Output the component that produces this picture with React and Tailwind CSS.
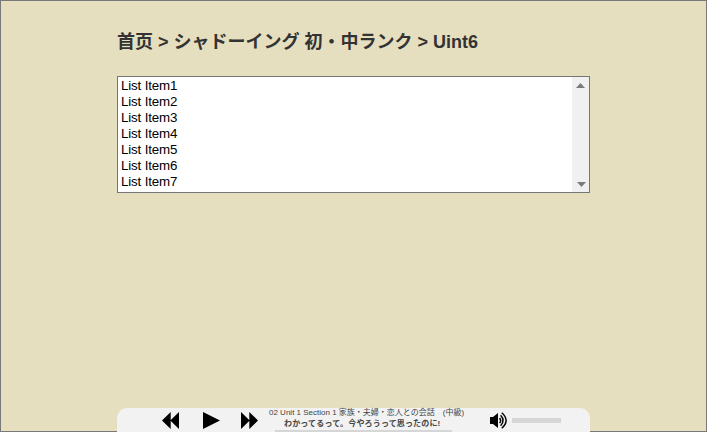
const items = ['List Item1', 'List Item2', 'List Item3', 'List Item4', 'List Item5', 'List Item6', 'List Item7'];

function ListBox() {
  return (
    <div className="flex h-[117px] w-[473px] border border-[#767676] bg-white">
      <ul className="flex-1 pt-px pl-[3px] text-[13.333px] leading-4 tracking-[-0.15px] text-black">
        {items.map((item) => (
          <li key={item}>{item}</li>
        ))}
      </ul>
      <div className="flex w-[17px] flex-col items-center justify-between bg-[#f0f0f0] pt-[6px] pb-[5px]">
        <svg className="h-[5px] w-[9px]" viewBox="0 0 9 5" fill="#7b7b7b"><path d="M0 5L4.5 0L9 5Z" /></svg>
        <svg className="ml-[2px] h-[5px] w-[9px]" viewBox="0 0 9 5" fill="#7b7b7b"><path d="M0 0H9L4.5 5Z" /></svg>
      </div>
    </div>
  );
}

function Player() {
  return (
    <div className="flex h-6 w-[473px] rounded-t-[10px] bg-[#f2f2f2] pl-[45px]">
      <svg className="mt-1 h-[17px] w-[17px] shrink-0" viewBox="0 0 17 17"><path d="M8.7 0V17L0 8.5ZM17 0V17L8.3 8.5Z" /></svg>
      <svg className="mt-1 ml-6 h-[17px] w-[17px] shrink-0" viewBox="0 0 17 17"><path d="M0 0L17 8.5L0 17Z" /></svg>
      <svg className="mt-1 ml-[21px] h-[17px] w-[17px] shrink-0" viewBox="0 0 17 17"><path d="M0 0L8.7 8.5L0 17ZM8.3 0L17 8.5L8.3 17Z" /></svg>
      <div className="ml-[10px] flex w-[197px] shrink-0 flex-col whitespace-nowrap text-[8px] text-[#444]">
        <div className="h-[10px] pl-px leading-[10px]">02 Unit 1 Section 1 家族・夫婦・恋人との会話　(中級)</div>
        <div className="h-3 pl-4 font-bold leading-[11px] tracking-[0.16px]">わかってるって。今やろうって思ったのに!</div>
        <div className="ml-[7px] h-[2px] w-[177px] bg-[#d6d6d6]" />
      </div>
      <svg className="mt-1 ml-[25px] h-[17px] w-[18px] shrink-0" viewBox="0 0 18 17">
        <path d="M0 5H3L8 1V16L3 12H0Z" />
        <path d="M9.6 6Q11.6 8.5 9.6 11M10.6 3.3Q15.6 8.5 10.6 13.7M11.8 .8Q20.4 8.5 11.8 16.2" fill="none" stroke="black" strokeWidth="1.5" />
      </svg>
      <div className="mt-[10px] ml-1 h-[5px] w-[49px] shrink-0 bg-[#d6d6d6]" />
    </div>
  );
}

export default function App() {
  return (
    <div className="relative flex h-[432px] w-[707px] flex-col items-start overflow-hidden bg-[#e6dfbf] pl-[117px] font-['Liberation_Sans','Noto_Sans_CJK_JP',sans-serif]">
      <h1 className="mt-[28px] h-[48px] whitespace-nowrap text-[18px] font-bold leading-6 text-[#333]">
        <span className="font-['Noto_Sans_CJK_SC',sans-serif]">首页</span> &gt; シャドーイング 初・中ランク &gt; Uint6
      </h1>
      <ListBox />
      <div className="pointer-events-none absolute inset-0 border border-[#797979]" />
      <div className="relative mt-auto">
        <Player />
      </div>
    </div>
  );
}
